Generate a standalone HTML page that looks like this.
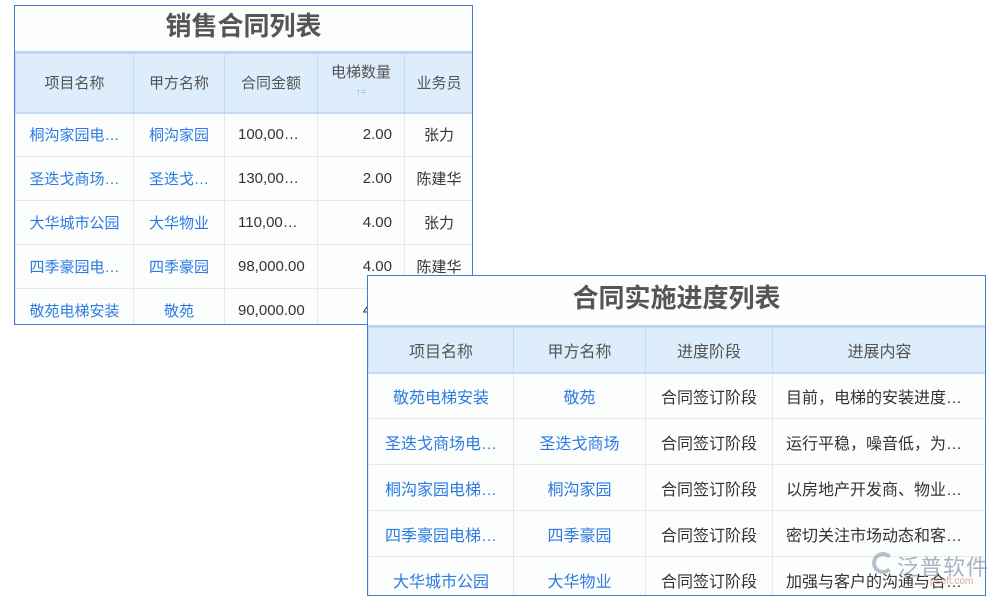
<!DOCTYPE html>
<html><head><meta charset="utf-8"><style>
body{margin:0;width:1000px;height:600px;background:#fff;position:relative;overflow:hidden;font-family:"Liberation Sans","Noto Sans CJK SC",sans-serif}
.box{position:absolute;border:1px solid #4a78d6;background:#fcfdfd;overflow:hidden;box-sizing:border-box}
.title{text-align:center;font-weight:bold;color:#555;border-bottom:2px solid #b9d3f0;box-sizing:border-box}
table{border-collapse:collapse;table-layout:fixed}
td{border:1px solid #e6e8ea;font-size:15px;color:#333;white-space:nowrap;overflow:hidden;padding:0 6px;text-align:center}
tr.h td{background:#ddedfb;color:#555;border-color:#c6dbef;border-bottom:2px solid #c6dbef}
.l{color:#2d7be0}
.r{text-align:right;padding-right:12px}
.lt{text-align:left;padding-left:13px}
</style></head><body>
<div class="box" style="left:14px;top:5px;width:459px;height:320px">
<div class="title" style="height:47px;line-height:40px;font-size:26px">销售合同列表</div>
<table style="width:458px">
<col style="width:118px"><col style="width:91px"><col style="width:93px"><col style="width:87px"><col style="width:69px">
<tr class="h" style="height:59px"><td>项目名称</td><td>甲方名称</td><td>合同金额</td><td style="line-height:18px">电梯数量<br><span style="font-size:10px;color:#9bb">↑=</span></td><td>业务员</td></tr>
<tr style="height:44px"><td class="l">桐沟家园电…</td><td class="l">桐沟家园</td><td class="lt">100,00…</td><td class="r">2.00</td><td>张力</td></tr>
<tr style="height:44px"><td class="l">圣迭戈商场…</td><td class="l">圣迭戈…</td><td class="lt">130,00…</td><td class="r">2.00</td><td>陈建华</td></tr>
<tr style="height:44px"><td class="l">大华城市公园</td><td class="l">大华物业</td><td class="lt">110,00…</td><td class="r">4.00</td><td>张力</td></tr>
<tr style="height:44px"><td class="l">四季豪园电…</td><td class="l">四季豪园</td><td class="lt">98,000.00</td><td class="r">4.00</td><td>陈建华</td></tr>
<tr style="height:44px"><td class="l">敬苑电梯安装</td><td class="l">敬苑</td><td class="lt">90,000.00</td><td class="r">4.00</td><td>张力</td></tr>
</table></div>
<div class="box" style="left:367px;top:275px;width:619px;height:321px">
<div class="title" style="height:51px;line-height:44px;font-size:26px">合同实施进度列表</div>
<table style="width:618px">
<col style="width:145px"><col style="width:132px"><col style="width:127px"><col style="width:214px">
<tr class="h" style="height:45px;font-size:16px"><td style="font-size:16px">项目名称</td><td style="font-size:16px">甲方名称</td><td style="font-size:16px">进度阶段</td><td style="font-size:16px">进展内容</td></tr>
<tr style="height:46px"><td class="l">敬苑电梯安装</td><td class="l">敬苑</td><td>合同签订阶段</td><td class="lt">目前，电梯的安装进度…</td></tr>
<tr style="height:46px"><td class="l">圣迭戈商场电…</td><td class="l">圣迭戈商场</td><td>合同签订阶段</td><td class="lt">运行平稳，噪音低，为…</td></tr>
<tr style="height:46px"><td class="l">桐沟家园电梯…</td><td class="l">桐沟家园</td><td>合同签订阶段</td><td class="lt">以房地产开发商、物业…</td></tr>
<tr style="height:46px"><td class="l">四季豪园电梯…</td><td class="l">四季豪园</td><td>合同签订阶段</td><td class="lt">密切关注市场动态和客…</td></tr>
<tr style="height:46px"><td class="l">大华城市公园</td><td class="l">大华物业</td><td>合同签订阶段</td><td class="lt">加强与客户的沟通与合…</td></tr>
</table></div>
<style>.box table td{font-size:16px}.box:first-of-type table td{font-size:15px}</style>
<div style="position:absolute;left:872px;top:552px;width:22px;height:22px;border-radius:50%;border:4px solid #8a9ab0;border-right-color:transparent;opacity:.6;box-sizing:border-box"></div>
<div style="position:absolute;left:897px;top:550px;font-size:22px;color:#8a9ab0;opacity:.75;letter-spacing:1px">泛普软件</div>
<div style="position:absolute;left:930px;top:576px;font-size:10px;color:#d9928a;opacity:.8">psoft.com</div>
</body></html>
